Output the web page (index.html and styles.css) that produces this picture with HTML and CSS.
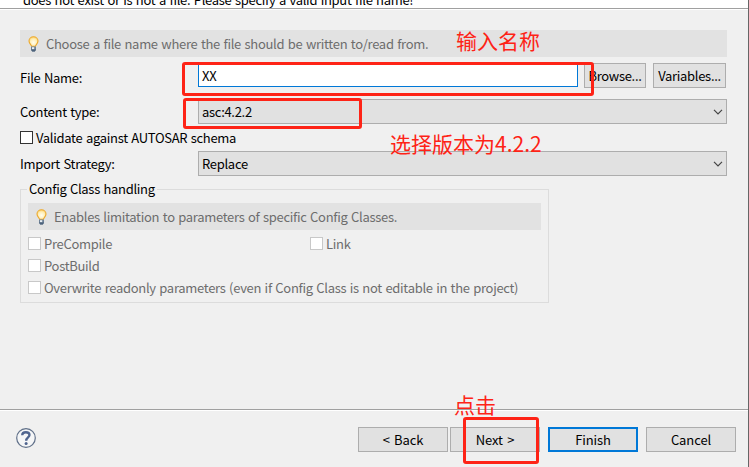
FILE: index.html
```html
<!DOCTYPE html>
<html lang="en">
<head>
<meta charset="utf-8">
<title>Import</title>
<link rel="stylesheet" href="styles.css">
</head>
<body>
<svg class="defs" width="0" height="0">
  <defs>
    <radialGradient id="glass" cx="50%" cy="60%" r="60%"><stop offset="0" stop-color="#fffdf0"/><stop offset=".6" stop-color="#ffefb8"/><stop offset="1" stop-color="#fbcf68"/></radialGradient>
    <symbol id="bulb" viewBox="0 0 11 16">
      <path d="M3.600 10.200C3.200 8.500 1 7.600 1 5.100A4.500 4.300 0 0 1 10 5.100C10 7.600 7.800 8.500 7.400 10.200Z" fill="url(#glass)" stroke="#eda92c" stroke-width="1.100"/>
      <path d="M3 10.500h5v3.500l-1.200 1.500h-2.600l-1.200-1.500z" fill="#6e8196"/>
      <path d="M4 11.200h2.200v2h-2.200z" fill="#e9eff4"/>
      <path d="M3 13.500h5l-1.200 2h-2.600z" fill="#4c627b"/>
    </symbol>
    <symbol id="chevron" viewBox="0 0 10 6"><path d="M1 .8 5 4.800 9 .8" fill="none" stroke="#444" stroke-width="1.200"/></symbol>
  </defs>
</svg>
<div class="dialog">
  <header class="message"><span>does not exist or is not a file. Please specify a valid input file name!</span></header>
  <main class="content">
    <div class="hint"><svg class="bulb"><use href="#bulb"/></svg><span>Choose a file name where the file should be written to/read from.</span></div>
    <div class="row file-row">
      <label>File Name:</label><div class="input">XX</div>
      <div class="button browse">Browse...</div><div class="button variables">Variables...</div>
    </div>
    <div class="row combo-row"><label>Content type:</label><div class="combo"><span>asc:4.2.2</span><svg class="chevron"><use href="#chevron"/></svg></div></div>
    <div class="check validate"><i></i><span>Validate against AUTOSAR schema</span></div>
    <div class="row combo-row"><label>Import Strategy:</label><div class="combo"><span>Replace</span><svg class="chevron"><use href="#chevron"/></svg></div></div>
    <section class="group">
      <h2>Config Class handling</h2>
      <div class="hint"><svg class="bulb"><use href="#bulb"/></svg><span>Enables limitation to parameters of specific Config Classes.</span></div>
      <div class="checks">
        <div class="check"><i></i><span>PreCompile</span></div><div class="check"><i></i><span>Link</span></div>
        <div class="check wide"><i></i><span>PostBuild</span></div>
        <div class="check wide"><i></i><span>Overwrite readonly parameters (even if Config Class is not editable in the project)</span></div>
      </div>
    </section>
  </main>
  <footer class="footer">
    <svg class="help" viewBox="0 0 20 20"><circle cx="10" cy="10" r="9.300" fill="#f5f6f7" stroke="#607089" stroke-width="1.200"/><path d="M6.200 7.200C6.300 3.200 13.500 3.300 13.500 7.100C13.500 9.400 10.200 9.500 10.200 12.700" fill="none" stroke="#50658f" stroke-width="2.300"/><circle cx="10.100" cy="15.600" r="1.500" fill="#50658f"/></svg>
    <div class="button">&lt; Back</div><div class="button next">Next &gt;</div><div class="button finish">Finish</div><div class="button cancel">Cancel</div>
  </footer>
</div>
<div class="mark mark-file"></div>
<div class="mark mark-type"></div>
<div class="mark mark-next"></div>
<div class="note note-file" lang="zh">输入名称</div>
<div class="note note-type" lang="zh">选择版本为4.2.2</div>
<div class="note note-next" lang="zh">点击</div>
</body>
</html>
```
FILE: styles.css
```css
* { box-sizing: border-box; }
body { margin: 0; width: 749px; height: 467px; overflow: hidden; background: #f0f0f0; font: 13px/20px "Noto Sans CJK SC", sans-serif; letter-spacing: -.3px; word-spacing: .9px; color: #000; white-space: nowrap; }
.defs { position: absolute; }
.dialog { height: 467px; border-right: 1px solid #666; display: flex; flex-direction: column; }
.message { height: 10px; flex: none; background: #fff; border-bottom: 1px solid #fff; box-shadow: inset 0 -1px #a0a0a0; padding-left: 23px; display: flex; align-items: flex-end; overflow: hidden; }
.message span { margin-bottom: -1px; }
.content { padding: 20px 21px 0 20px; height: 399px; flex: none; }
.hint { height: 27px; display: flex; align-items: center; gap: 7px; padding-left: 8px; background: #e2e2e2; color: #6d6d6d; }
.bulb { width: 11px; height: 16px; flex: none; }
.group .bulb { margin-right: 0; }
.row { display: flex; align-items: center; }
.row label { width: 178px; flex: none; }
.file-row { margin-top: 6px; height: 25px; }
.file-row label { padding-top: 4px; }
.input { width: 380px; height: 23px; border: 1px solid #0078d7; background: #fff; padding-left: 3px; line-height: 22px; }
.button { width: 90px; height: 25px; border: 1px solid #adadad; background: #e1e1e1; text-align: center; line-height: 23px; }
.browse { width: 62px; margin-left: 6px; }
.variables { width: 73px; margin-left: 7px; }
.combo-row { margin-top: 11px; height: 25px; }
.combo { width: 529px; height: 25px; border: 1px solid #adadad; background: #e1e1e1; display: flex; align-items: center; justify-content: space-between; padding: 0 3px 0 3px; }
.chevron { width: 10px; height: 6px; }
.check { display: flex; align-items: center; gap: 3px; height: 13px; }
.check i { width: 13px; height: 13px; border: 1px solid #c8c8c8; background: #fff; flex: none; }
.validate { margin-top: 7px; }
.validate i { border-color: #333; }
.validate + .combo-row { margin-top: 7px; }
.group { position: relative; width: 529px; height: 114px; margin-top: 13px; border: 1px solid #dcdcdc; padding: 13px 7px 0; }
.group h2 { position: absolute; left: 6px; top: -11px; margin: 0; padding: 0 2px; background: #f0f0f0; font-size: 13px; line-height: 20px; font-weight: 400; }
.checks { display: grid; grid-template-columns: 282px 1fr; row-gap: 9px; margin-top: 7px; color: #6d6d6d; }
.wide { grid-column: 1 / 3; }
.footer { height: 58px; display: flex; align-items: flex-start; border-top: 1px solid #a0a0a0; box-shadow: inset 0 1px #fff; padding: 17px 12px 0 16px; }
.footer .button { letter-spacing: -.1px; word-spacing: 1.5px; }
.help { width: 20px; height: 20px; margin: 1px auto 0 0; }
.next { margin-left: 2px; }
.finish { margin-left: 8px; border: 2px solid #0078d7; line-height: 21px; }
.cancel { margin-left: 8px; }
.mark { position: absolute; border: 3px solid #fe2316; border-radius: 3px; }
.mark-file { left: 182px; top: 62px; width: 412px; height: 34px; }
.mark-type { left: 183px; top: 98px; width: 179px; height: 31px; }
.mark-next { left: 463px; top: 417px; width: 76px; height: 47px; }
.note { position: absolute; color: #fe2316; font-size: 21px; line-height: 30px; letter-spacing: 0; }
.note-file { left: 456px; top: 25px; }
.note-type { left: 390px; top: 128px; }
.note-next { left: 454px; top: 389px; }
```
